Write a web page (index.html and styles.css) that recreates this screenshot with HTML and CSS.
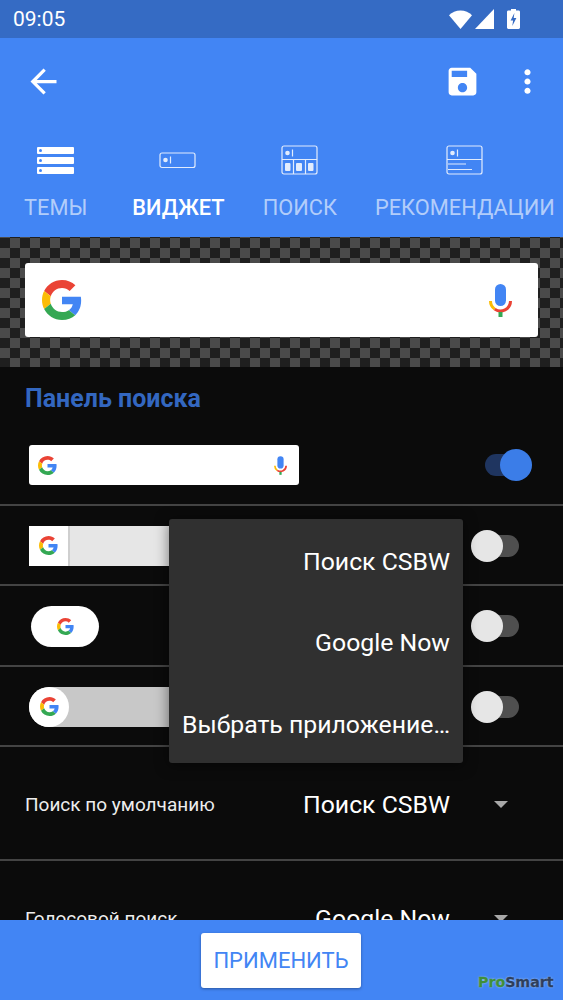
FILE: index.html
```html
<!DOCTYPE html>
<html lang="ru">
<head>
  <meta charset="UTF-8">
  <meta name="viewport" content="width=device-width, initial-scale=1">
  <title>Виджет</title>
  <link rel="stylesheet" href="styles.css">
</head>
<body>

<svg class="defs" width="0" height="0">
  <symbol id="g-logo" viewBox="0 0 48 48">
    <path fill="#EA4335" d="M24 9.5c3.54 0 6.71 1.22 9.21 3.6l6.85-6.85C35.9 2.38 30.47 0 24 0 14.62 0 6.51 5.38 2.56 13.22l7.98 6.19C12.43 13.72 17.74 9.5 24 9.5z"/>
    <path fill="#4285F4" d="M46.98 24.55c0-1.57-.15-3.09-.38-4.55H24v9.02h12.94c-.58 2.96-2.26 5.48-4.78 7.18l7.73 6c4.51-4.18 7.09-10.36 7.09-17.65z"/>
    <path fill="#FBBC05" d="M10.53 28.59c-.48-1.45-.76-2.99-.76-4.59s.27-3.14.76-4.59l-7.98-6.19C.92 16.46 0 20.12 0 24c0 3.88.92 7.54 2.56 10.78l7.97-6.19z"/>
    <path fill="#34A853" d="M24 48c6.48 0 11.93-2.13 15.89-5.81l-7.73-6c-2.15 1.45-4.92 2.3-8.16 2.3-6.26 0-11.57-4.22-13.47-9.91l-7.98 6.19C6.51 42.62 14.62 48 24 48z"/>
  </symbol>
  <symbol id="mic" viewBox="0 0 23 33">
    <rect x="6" y="0" width="11" height="22" rx="5.5" fill="#4285F4"/>
    <path d="M1.5 17a10 10 0 0 0 4.2 8.1" fill="none" stroke="#FBBC05" stroke-width="3"/>
    <path d="M5.7 25.1a10 10 0 0 0 15.8-8.1" fill="none" stroke="#EA4335" stroke-width="3"/>
    <rect x="9.5" y="28" width="4" height="5" fill="#34A853"/>
  </symbol>
</svg>

<div class="page">
  <div class="status-bar">
    <span class="time">09:05</span>
    <div class="status-icons">
      <svg class="wifi" width="23" height="19" viewBox="0 0 23 19"><path fill="#fff" d="M11.5 19L0 5.2C3 2.4 7 .5 11.5.5S20 2.4 23 5.2z"/></svg>
      <svg class="signal" width="19" height="20" viewBox="0 0 19 20"><path fill="#fff" d="M0 20L19 0v20z"/></svg>
      <svg class="battery" width="13" height="20" viewBox="0 0 13 20"><path fill="#fff" d="M4 0h5v1.6h2.6c.8 0 1.4.6 1.4 1.4v15.6c0 .8-.6 1.4-1.4 1.4H1.4C.6 20 0 19.4 0 18.6V3c0-.8.6-1.4 1.4-1.4H4z"/><path fill="#356bc4" d="M7.4 4L3.6 11.5h2.5L5.3 17l4.1-8H6.7z"/></svg>
    </div>
  </div>

  <header class="app-bar">
    <div class="toolbar">
      <svg class="back" width="39" height="39" viewBox="0 0 24 24"><path fill="#fff" d="M20 11H7.83l5.59-5.59L12 4l-8 8 8 8 1.41-1.41L7.83 13H20v-2z"/></svg>
      <div class="toolbar-actions">
        <svg width="37" height="37" viewBox="0 0 24 24"><path fill="#fff" d="M17 3H5c-1.11 0-2 .9-2 2v14c0 1.1.89 2 2 2h14c1.1 0 2-.9 2-2V7l-4-4zm-5 16c-1.66 0-3-1.34-3-3s1.34-3 3-3 3 1.34 3 3-1.34 3-3 3zm3-10H5V5h10v4z"/></svg>
        <svg width="37" height="37" viewBox="0 0 24 24"><path fill="#fff" d="M12 8c1.1 0 2-.9 2-2s-.9-2-2-2-2 .9-2 2 .9 2 2 2zm0 2c-1.1 0-2 .9-2 2s.9 2 2 2 2-.9 2-2-.9-2-2-2zm0 6c-1.1 0-2 .9-2 2s.9 2 2 2 2-.9 2-2-.9-2-2-2z"/></svg>
      </div>
    </div>
    <nav class="tabs">
      <div class="tab">
        <svg width="38" height="30" viewBox="0 0 38 30">
          <rect x="0" y="2" width="37" height="7" rx="1" fill="#fff"/>
          <rect x="0" y="12" width="37" height="7" rx="1" fill="#fff"/>
          <rect x="0" y="22" width="37" height="7" rx="1" fill="#fff"/>
          <circle cx="3.5" cy="5.5" r="1.5" fill="#4285f4"/>
          <circle cx="3.5" cy="15.5" r="1.5" fill="#4285f4"/>
          <circle cx="3.5" cy="25.5" r="1.5" fill="#4285f4"/>
        </svg>
        <span>ТЕМЫ</span>
      </div>
      <div class="tab active">
        <svg width="38" height="30" viewBox="0 0 38 30" fill="none" stroke="#fff" opacity=".85">
          <rect x="1" y="8" width="35" height="14.5" rx="2" stroke-width="1.2"/>
          <circle cx="6.5" cy="15" r="2.3" fill="#fff" stroke="none"/>
          <path d="M11.5 11.5v7" stroke-width="1.2"/>
        </svg>
        <span>ВИДЖЕТ</span>
      </div>
      <div class="tab">
        <svg width="38" height="30" viewBox="0 0 38 30" fill="none" stroke="#fff" opacity=".85">
          <rect x="1" y="1" width="35" height="28" rx="2" stroke-width="1.2"/>
          <path d="M1 14.5h35M12.5 14.5V29M24.5 14.5V29M11.5 4.5v7" stroke-width="1.2"/>
          <circle cx="6.5" cy="8" r="2.3" fill="#fff" stroke="none"/>
          <rect x="4" y="18" width="5.5" height="8" rx="1" fill="#fff" stroke="none"/>
          <rect x="15" y="18" width="6" height="8" rx="1" fill="#fff" stroke="none"/>
          <rect x="27" y="18" width="5.5" height="8" rx="1" fill="#fff" stroke="none"/>
        </svg>
        <span>ПОИСК</span>
      </div>
      <div class="tab">
        <svg width="38" height="30" viewBox="0 0 38 30" fill="none" stroke="#fff" opacity=".85">
          <rect x="1" y="1" width="35" height="28" rx="2" stroke-width="1.2"/>
          <path d="M1 14.5h35M11.5 4.5v7" stroke-width="1.2"/>
          <circle cx="6.5" cy="8" r="2.3" fill="#fff" stroke="none"/>
          <path d="M2 19h18M2 24.5h24" stroke-width="1.2"/>
        </svg>
        <span>РЕКОМЕНДАЦИИ</span>
      </div>
    </nav>
  </header>

  <section class="preview">
    <div class="preview-card">
      <svg class="g-large"><use href="#g-logo"/></svg>
      <svg class="mic-large"><use href="#mic"/></svg>
    </div>
  </section>

  <main class="content">
    <h2 class="section-title">Панель поиска</h2>

    <div class="row">
      <div class="bar bar-plain">
        <svg class="g-small"><use href="#g-logo"/></svg>
        <svg class="mic-small"><use href="#mic"/></svg>
      </div>
      <div class="toggle on"><span class="thumb"></span></div>
    </div>

    <div class="row">
      <div class="bar bar-tab">
        <span class="bar-cap"><svg class="g-small"><use href="#g-logo"/></svg></span>
      </div>
      <div class="toggle"><span class="thumb"></span></div>
    </div>

    <div class="row">
      <div class="bar-pill"><svg class="g-pill"><use href="#g-logo"/></svg></div>
      <div class="toggle"><span class="thumb"></span></div>
    </div>

    <div class="row">
      <div class="bar bar-round">
        <span class="bar-circle"><svg class="g-small"><use href="#g-logo"/></svg></span>
      </div>
      <div class="toggle"><span class="thumb"></span></div>
    </div>

    <div class="select-row">
      <span class="select-label">Поиск по умолчанию</span>
      <span class="select-value">Поиск CSBW</span>
      <span class="select-arrow"></span>
    </div>

    <div class="select-row">
      <span class="select-label">Голосовой поиск</span>
      <span class="select-value">Google Now</span>
      <span class="select-arrow"></span>
    </div>
  </main>

  <footer class="footer">
    <button class="apply">ПРИМЕНИТЬ</button>
    <span class="watermark"><b>Pro</b>Smart</span>
  </footer>

  <div class="menu">
    <div class="menu-item">Поиск CSBW</div>
    <div class="menu-item">Google Now</div>
    <div class="menu-item">Выбрать приложение…</div>
  </div>
</div>

</body>
</html>
```

FILE: styles.css
```css
* {
  box-sizing: border-box;
}
body {
  margin: 0;
  font-family: Roboto, sans-serif;
  background: #0b0b0b;
  color: #fff;
}
.defs {
  position: absolute;
}
.page {
  position: relative;
  width: 563px;
  height: 1000px;
  display: flex;
  flex-direction: column;
  overflow: hidden;
}

/* status bar */
.status-bar {
  height: 38px;
  flex: none;
  background: #356bc4;
  display: flex;
  align-items: center;
  justify-content: space-between;
  padding: 0 43px 0 13px;
}
.time {
  font-size: 21px;
}
.status-icons {
  display: flex;
  align-items: center;
  gap: 3px;
}
.battery {
  margin-left: 10px;
}

/* app bar */
.app-bar {
  height: 199px;
  flex: none;
  background: #4285f4;
}
.toolbar {
  height: 86px;
  display: flex;
  align-items: center;
  justify-content: space-between;
  padding: 0 17px 0 24px;
}
.toolbar-actions {
  display: flex;
  align-items: center;
  gap: 28px;
}
.tabs {
  display: flex;
  padding: 21px 0 0 24px;
}
.tab {
  display: flex;
  flex-direction: column;
  align-items: center;
  gap: 20px;
  font-size: 21.8px;
  line-height: 26px;
  color: rgba(255, 255, 255, 0.6);
  white-space: nowrap;
  margin-right: 38px;
}
.tab:first-child {
  margin-right: 45px;
}
.tab.active {
  color: #fff;
  font-weight: 500;
}

/* checkerboard preview */
.preview {
  height: 130px;
  flex: none;
  padding: 26px 25px 30px;
  background: repeating-conic-gradient(#4a4a4a 0 25%, #1f1f1f 0 50%) 0 1px / 20px 20px;
}
.preview-card {
  height: 74px;
  background: #fff;
  border-radius: 3px;
  display: flex;
  align-items: center;
  justify-content: space-between;
  padding: 0 26px 0 17px;
}
.g-large {
  width: 40px;
  height: 40px;
}
.mic-large {
  width: 23px;
  height: 33px;
}

/* list */
.content {
  flex: 1;
  min-height: 0;
  overflow: hidden;
}
.section-title {
  margin: 0;
  height: 58px;
  padding: 17px 0 0 25px;
  font-size: 25px;
  line-height: 29px;
  font-weight: 700;
  color: #3367c0;
}
.row {
  height: 80.5px;
  display: flex;
  align-items: center;
  justify-content: space-between;
  padding: 2px 44px 0 29px;
  border-bottom: 2px solid #444;
}
.bar {
  width: 270px;
  height: 40px;
  display: flex;
  align-items: center;
  justify-content: space-between;
  background: #fff;
}
.bar-plain {
  border-radius: 3px;
  padding: 0 12px 0 9px;
}
.g-small {
  width: 19px;
  height: 19px;
}
.mic-small {
  width: 13px;
  height: 19px;
}
.bar-tab {
  background: #e6e6e6;
}
.bar-cap {
  width: 41px;
  height: 40px;
  display: flex;
  align-items: center;
  justify-content: center;
  background: #fff;
  border-right: 2px solid #cfcfcf;
}
.bar-pill {
  width: 68px;
  height: 41px;
  margin-left: 2px;
  margin-right: auto;
  border-radius: 21px;
  background: #fff;
  display: flex;
  align-items: center;
  justify-content: center;
}
.g-pill {
  width: 17px;
  height: 17px;
}
.bar-round {
  background: #c8c8c8;
  border-radius: 20px 0 0 20px;
}
.bar-circle {
  width: 40px;
  height: 40px;
  border-radius: 50%;
  background: #fff;
  display: flex;
  align-items: center;
  justify-content: center;
}

/* switches */
.toggle {
  width: 34px;
  height: 22px;
  border-radius: 11px;
  background: #4f4f4f;
  display: flex;
  align-items: center;
}
.thumb {
  width: 32px;
  height: 32px;
  flex: none;
  margin-left: -14px;
  border-radius: 50%;
  background: #e6e6e6;
}
.toggle.on {
  background: #1f3560;
  justify-content: flex-end;
}
.toggle.on .thumb {
  margin-right: -13px;
  background: #3b7de8;
}

/* dropdown rows */
.select-row {
  height: 114px;
  display: flex;
  align-items: center;
  padding: 2px 55px 0 25px;
  border-bottom: 2px solid #444;
}
.select-label {
  font-size: 19px;
  color: #eee;
}
.select-value {
  margin-left: auto;
  font-size: 24.8px;
}
.select-arrow {
  width: 0;
  height: 0;
  margin-left: 44px;
  border-left: 7px solid transparent;
  border-right: 7px solid transparent;
  border-top: 7px solid #a8a8a8;
}

/* footer */
.footer {
  height: 80px;
  flex: none;
  background: #4285f4;
  display: flex;
  justify-content: center;
  padding-top: 13px;
  position: relative;
}
.apply {
  width: 160px;
  height: 55px;
  margin-right: 1px;
  border: none;
  border-radius: 3px;
  background: #fff;
  color: #4285f4;
  font-family: Roboto, sans-serif;
  font-size: 22px;
  box-shadow: 0 1px 3px rgba(0, 0, 0, 0.35);
}
.watermark {
  position: absolute;
  left: 478px;
  top: 53px;
  font-family: "DejaVu Sans", sans-serif;
  font-weight: 700;
  font-size: 14.2px;
  line-height: 18px;
  color: #2d3f5c;
  -webkit-text-stroke: 0.3px currentColor;
  text-shadow: 0 0 2px #cfe0f5;
}
.watermark b {
  color: #3f8f3a;
}

/* popup */
.menu {
  position: absolute;
  left: 169px;
  top: 519px;
  width: 294px;
  height: 244px;
  background: #303030;
  border-radius: 3px;
  box-shadow: 0 2px 14px rgba(0, 0, 0, 0.5);
}
.menu-item {
  height: 81.3px;
  display: flex;
  align-items: center;
  justify-content: flex-end;
  padding: 4px 13px 0 0;
  font-size: 24.8px;
  white-space: nowrap;
}
```
